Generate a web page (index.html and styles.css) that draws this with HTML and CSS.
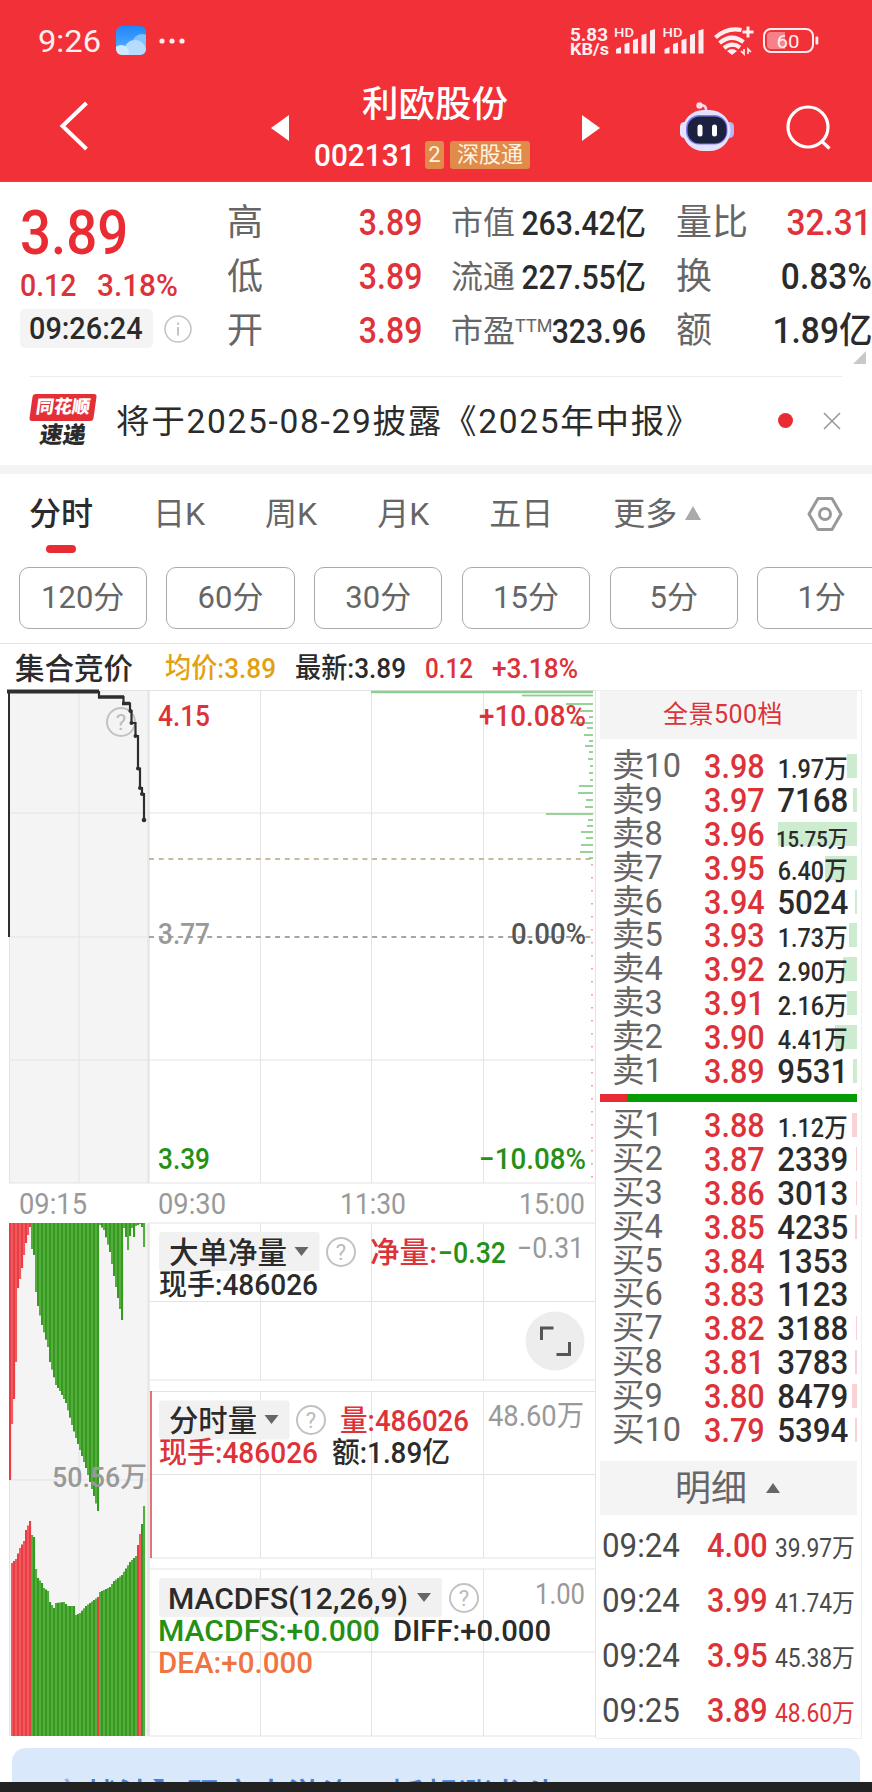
FILE: index.html
```
<!DOCTYPE html>
<html lang="zh-CN">
  <head>
    <meta charset="utf-8">
    <title>利欧股份 002131</title>
    <link rel="stylesheet" href="styles.css">
  </head>
  <body>
    <header class="header">
      <svg class="status" viewBox="0 0 872 70">
        <defs>
          <linearGradient id="sky" x1="0" y1="0" x2="0" y2="1">
            <stop offset="0" stop-color="#1f86fb"/>
            <stop offset="1" stop-color="#5db4ff"/>
          </linearGradient>
          <clipPath id="skyClip"><rect x="116" y="26" width="30" height="29" rx="6"/></clipPath>
        </defs>
        <text x="38" y="52" font-size="32" textLength="63" lengthAdjust="spacingAndGlyphs">9:26</text>
        <g clip-path="url(#skyClip)">
          <rect x="116" y="26" width="30" height="29" fill="url(#sky)"/>
          <circle cx="142" cy="44" r="10" fill="#80c2ff"/>
          <circle cx="135" cy="51" r="11" fill="#b5dcff"/>
          <circle cx="121" cy="53" r="8" fill="#cfe9ff"/>
        </g>
        <circle cx="162" cy="41" r="2.6"/>
        <circle cx="172" cy="41" r="2.6"/>
        <circle cx="182" cy="41" r="2.6"/>
        <g font-weight="700">
          <text x="570" y="40.500" font-size="17.500" textLength="38" lengthAdjust="spacingAndGlyphs">5.83</text>
          <text x="570" y="55" font-size="16.500" textLength="39" lengthAdjust="spacingAndGlyphs">KB/s</text>
        </g>
        <text x="614" y="37" font-size="12.500" font-weight="500" textLength="20" lengthAdjust="spacingAndGlyphs">HD</text>
        <text x="662.500" y="37" font-size="12.500" font-weight="500" textLength="20" lengthAdjust="spacingAndGlyphs">HD</text>
        <path id="signal" d="M616 49l5-2v6.500h-5zM624.500 44l5-1.500v11h-5zM633 40l5-1.500v15H633zM641.500 35l5-1.500v20h-5zM650 30.500l5-1.500v24.500H650z"/>
        <use href="#signal" x="48.500"/>
        <g fill="none" stroke="#ffeef0" stroke-width="4.200">
          <path d="M715.500 37.500Q727 27 741.500 30"/>
          <path d="M719.500 43q12-10 24-1"/>
          <path d="M724 48q8-6.500 16-.5"/>
          <path d="M748 26.500v11M742.500 32h11" stroke-width="3"/>
          <path d="M744 49v5l-3-3M748 54v-5l3 3" stroke-width="1.700"/>
        </g>
        <path d="M727 51q5-4 10 0l-5 4z"/>
        <rect x="764" y="29" width="49" height="23" rx="7" fill="none" stroke="#ffeef0" stroke-width="2"/>
        <path d="M771 32h14v17h-14a4 4 0 0 1-4-4v-9a4 4 0 0 1 4-4z" fill="#f88087"/>
        <rect x="815.500" y="36.500" width="2.800" height="8" rx="1"/>
        <text x="776.500" y="47.500" font-size="19" textLength="23" lengthAdjust="spacingAndGlyphs">60</text>
      </svg>
      <nav class="nav">
        <svg class="nav-icon back" width="40" height="60" viewBox="0 0 40 60"><path d="M33.500 7L9.500 30l24 23"/></svg>
        <svg class="arrow prev" width="18" height="28"><path d="M0 14L18 1v26z"/></svg>
        <div class="stock">
          <div class="stock-name">利欧股份</div>
          <div class="stock-sub">
            <span class="stock-code">002131</span>
            <span class="badge badge-num">2</span>
            <span class="badge">深股通</span>
          </div>
        </div>
        <svg class="arrow next" width="18" height="28"><path d="M18 14L0 1v26z"/></svg>
        <svg class="robot" width="54" height="50" viewBox="0 0 54 50">
          <path d="M19 3q8-1 7 7" fill="none" stroke="#f8d5ea" stroke-width="2.500"/>
          <circle cx="19.500" cy="3.500" r="3.200" fill="#fbdcec"/>
          <rect x="0" y="20" width="9" height="16" rx="4.500" fill="#e9e4ff"/>
          <rect x="45" y="20" width="9" height="16" rx="4.500" fill="#b9b5fa"/>
          <rect x="2.500" y="8" width="48" height="41" rx="21" fill="#e4e3fb"/>
          <rect x="6" y="13" width="41.500" height="29.500" rx="13" fill="#7f7df0"/>
          <rect x="7.500" y="14.500" width="39" height="27" rx="12" fill="#1c2140"/>
          <rect x="17.500" y="22.500" width="5" height="12" rx="2.500" fill="#fff"/>
          <rect x="32" y="22.500" width="5" height="12" rx="2.500" fill="#fff"/>
        </svg>
        <svg class="nav-icon search" width="48" height="48" viewBox="0 0 48 48"><circle cx="22" cy="22" r="20"/><path d="M36 36.500l7.500 7"/></svg>
      </nav>
    </header>

    <section class="quote">
      <div class="quote-main">
        <div class="price"><span class="num">3.89</span></div>
        <div class="change"><span class="num">0.12</span><span class="num">3.18%</span></div>
        <div class="clock">
          <span class="clock-pill"><span class="num">09:26:24</span></span>
          <svg width="28" height="28" viewBox="0 0 28 28"><circle cx="14" cy="14" r="13" fill="none" stroke="#c4c4c4" stroke-width="1.600"/><path d="M14 7.500v2.500M14 12v8.500" stroke="#c4c4c4" stroke-width="2"/></svg>
        </div>
      </div>
      <dl class="stats stats-a">
        <dt>高</dt><dd class="up"><span class="num">3.89</span></dd>
        <dt>低</dt><dd class="up"><span class="num">3.89</span></dd>
        <dt>开</dt><dd class="up"><span class="num">3.89</span></dd>
      </dl>
      <dl class="stats stats-b">
        <dt>市值</dt><dd><span class="num">263.42亿</span></dd>
        <dt>流通</dt><dd><span class="num">227.55亿</span></dd>
        <dt>市盈<sup>TTM</sup></dt><dd><span class="num">323.96</span></dd>
      </dl>
      <dl class="stats stats-c">
        <dt>量比</dt><dd class="up"><span class="num">32.31</span></dd>
        <dt>换</dt><dd><span class="num">0.83%</span></dd>
        <dt>额</dt><dd><span class="num">1.89亿</span></dd>
      </dl>
      <span class="corner"></span>
    </section>

    <section class="notice">
      <div class="notice-logo">
        <span class="logo-top">同花顺</span>
        <span class="logo-bottom">速递</span>
      </div>
      <p>将于2025-08-29披露《2025年中报》</p>
      <span class="dot"></span>
      <svg width="18" height="18" viewBox="0 0 18 18"><path d="M1 1l16 16M17 1L1 17" stroke="#999" stroke-width="1.600"/></svg>
    </section>

    <nav class="tabs">
      <span class="tab active">分时</span>
      <span class="tab">日K</span>
      <span class="tab">周K</span>
      <span class="tab">月K</span>
      <span class="tab">五日</span>
      <span class="tab">更多<i class="tri-up"></i></span>
      <svg class="settings" width="36" height="36" viewBox="0 0 36 36"><path d="M11 2.500h14L34 18l-9 15.500H11L2 18z"/><circle cx="18" cy="18" r="5.500"/></svg>
    </nav>

    <div class="periods">
      <button>120分</button>
      <button>60分</button>
      <button>30分</button>
      <button>15分</button>
      <button>5分</button>
      <button>1分</button>
    </div>

    <main class="market">
      <svg class="chart" viewBox="0 644 596 1100">
        <!-- info line -->
        <g font-size="28" font-weight="500">
          <text class="ink" x="15" y="678.500" font-size="29.500" textLength="118" lengthAdjust="spacingAndGlyphs">集合竞价</text>
          <text class="gold" x="165" y="678" textLength="111" lengthAdjust="spacingAndGlyphs">均价:3.89</text>
          <text class="ink" x="295" y="678" textLength="111" lengthAdjust="spacingAndGlyphs">最新:3.89</text>
          <text class="red" x="425" y="678" textLength="48" lengthAdjust="spacingAndGlyphs">0.12</text>
          <text class="red" x="492" y="678" textLength="86" lengthAdjust="spacingAndGlyphs">+3.18%</text>
        </g>

        <!-- call auction background -->
        <rect x="9" y="691" width="139.500" height="492" fill="#f4f4f4"/>
        <rect x="9" y="1223" width="139.500" height="513" fill="#f4f4f4"/>

        <path class="grid" d="M9.500 691V1183M79 691V1183M260.500 691V1183M371.500 691V1183M483.500 691V1183M9 690.500H596M9 813H596M9 937H149M9 1060H596M9 1183H596"/>
        <path class="grid" d="M9.500 1223V1736M79 1223V1736M9 1480H149M149 1223H596M149 1301.500H596M149 1380H596M260.500 1223V1380M371.500 1223V1380M483.500 1223V1380"/>
        <path class="grid" d="M149 1391.500H596M149 1474.500H596M149 1558H596M260.500 1391V1558M371.500 1391V1558M483.500 1391V1558"/>
        <path class="grid" d="M149 1569H596M149 1652H596M149 1736H596M260.500 1569V1736M371.500 1569V1736M483.500 1569V1736"/>
        <path d="M148.500 691V1183M148.500 1223V1736" stroke="#e6e6e6" stroke-width="2.500"/>
        <path class="grid" d="M595.500 690V1738"/>

        <path d="M149 859H594" stroke="#b5a27c" stroke-width="1.500" stroke-dasharray="5 4.700"/>
        <path d="M149 937H594" stroke="#888" stroke-width="1.500" stroke-dasharray="5 4.700"/>

        <g id="depth"></g>

        <g class="help"><circle cx="121" cy="722" r="14"/><text x="121" y="730" text-anchor="middle">?</text></g>
        <path d="M9 937V691.500" stroke="#2e2e2e" stroke-width="2"/>
        <path d="M7 691.500H99" stroke="#2e2e2e" stroke-width="4"/>
        <path d="M99 691v6h24.500v6.500h6.500v7.500h1.500v12h4v13h2.500v32.500h2V788h2v6h2v26" fill="none" stroke="#2e2e2e" stroke-width="2.200"/>
        <path d="M98 697h26M122 703.500h8" stroke="#2e2e2e" stroke-width="3.500"/>
        <g fill="#2e2e2e">
          <circle cx="130.500" cy="711" r="2"/><circle cx="131.500" cy="723" r="2"/><circle cx="135.500" cy="736" r="2"/>
          <circle cx="138" cy="768.500" r="2"/><circle cx="140" cy="788" r="2"/><circle cx="142" cy="794" r="2"/><circle cx="144" cy="820" r="2.300"/>
        </g>

        <!-- axis labels -->
        <g font-size="29" font-weight="500">
          <text class="red" x="158" y="725.500" textLength="52" lengthAdjust="spacingAndGlyphs">4.15</text>
          <text class="gray" x="158" y="944" textLength="52" lengthAdjust="spacingAndGlyphs">3.77</text>
          <text class="green" x="158" y="1169" textLength="52" lengthAdjust="spacingAndGlyphs">3.39</text>
          <text class="red" x="479" y="725.500" textLength="107" lengthAdjust="spacingAndGlyphs">+10.08%</text>
          <text class="dim" x="511" y="944" textLength="75" lengthAdjust="spacingAndGlyphs">0.00%</text>
          <text class="green" x="479" y="1169" textLength="107" lengthAdjust="spacingAndGlyphs">−10.08%</text>
        </g>
        <g class="gray" font-size="29">
          <text x="19" y="1214" textLength="68" lengthAdjust="spacingAndGlyphs">09:15</text>
          <text x="158" y="1214" textLength="68" lengthAdjust="spacingAndGlyphs">09:30</text>
          <text x="340" y="1214" textLength="66" lengthAdjust="spacingAndGlyphs">11:30</text>
          <text x="519" y="1214" textLength="66" lengthAdjust="spacingAndGlyphs">15:00</text>
        </g>

        <g id="netBars"></g>
        <g id="volBars"></g>
        <text class="gray" x="52" y="1487" font-size="28" font-weight="500" textLength="95" lengthAdjust="spacingAndGlyphs">50.56万</text>

        <!-- net order panel -->
        <rect class="chip" x="159" y="1232" width="160.500" height="39" rx="3"/>
        <text class="ink" x="169" y="1263" font-size="30" font-weight="500" textLength="118" lengthAdjust="spacingAndGlyphs">大单净量</text>
        <path class="caret" d="M294.500 1247h14l-7 9z"/>
        <g class="help"><circle cx="341" cy="1252" r="14"/><text x="341" y="1260" text-anchor="middle">?</text></g>
        <g font-size="29" font-weight="500">
          <text class="red" x="370" y="1263" textLength="67" lengthAdjust="spacingAndGlyphs">净量:</text>
          <text class="green" x="438" y="1263" textLength="68" lengthAdjust="spacingAndGlyphs">−0.32</text>
          <text class="ink" x="159" y="1295" textLength="159" lengthAdjust="spacingAndGlyphs">现手:486026</text>
        </g>
        <text class="gray" x="517" y="1258" font-size="29" textLength="67" lengthAdjust="spacingAndGlyphs">−0.31</text>
        <circle cx="555" cy="1341" r="29.500" fill="#ededed"/>
        <path d="M541.500 1340V1328h12M569.500 1342v12.500h-13" fill="none" stroke="#555" stroke-width="3"/>

        <!-- volume panel -->
        <path d="M151 1391V1558" stroke="#d9464c" stroke-width="1.500"/>
        <rect class="chip" x="159" y="1400.500" width="130.500" height="39" rx="3"/>
        <text class="ink" x="169" y="1431" font-size="30" font-weight="500" textLength="88" lengthAdjust="spacingAndGlyphs">分时量</text>
        <path class="caret" d="M264.500 1415h14l-7 9z"/>
        <g class="help"><circle cx="311" cy="1420" r="14"/><text x="311" y="1428" text-anchor="middle">?</text></g>
        <g font-size="29" font-weight="500">
          <text class="red" x="340" y="1431" textLength="129" lengthAdjust="spacingAndGlyphs">量:486026</text>
          <text class="red" x="159" y="1463" textLength="159" lengthAdjust="spacingAndGlyphs">现手:486026</text>
          <text class="ink" x="332" y="1463" textLength="118" lengthAdjust="spacingAndGlyphs">额:1.89亿</text>
        </g>
        <text class="gray" x="488" y="1426" font-size="29" textLength="96" lengthAdjust="spacingAndGlyphs">48.60万</text>

        <!-- MACD panel -->
        <rect class="chip" x="159" y="1578" width="283" height="39" rx="3"/>
        <text class="ink" x="168" y="1609" font-size="30" font-weight="500" textLength="240" lengthAdjust="spacingAndGlyphs">MACDFS(12,26,9)</text>
        <path class="caret" d="M417 1593h14l-7 9z"/>
        <g class="help"><circle cx="464" cy="1598" r="14"/><text x="464" y="1606" text-anchor="middle">?</text></g>
        <g font-size="29" font-weight="500">
          <text class="green" x="158" y="1640.500" textLength="222" lengthAdjust="spacingAndGlyphs">MACDFS:+0.000</text>
          <text class="ink" x="393" y="1640.500" textLength="158" lengthAdjust="spacingAndGlyphs">DIFF:+0.000</text>
          <text class="orange" x="158" y="1673" textLength="155" lengthAdjust="spacingAndGlyphs">DEA:+0.000</text>
        </g>
        <text class="gray" x="535" y="1604" font-size="29" textLength="50" lengthAdjust="spacingAndGlyphs">1.00</text>
      </svg>

      <aside class="book">
        <div class="book-head">全景500档</div>
        <div class="levels" id="asks"></div>
        <div class="ratio"><span></span></div>
        <div class="levels" id="bids"></div>
        <div class="detail-head">明细<i class="tri-up dark"></i></div>
        <div class="ticks" id="ticks"></div>
      </aside>
    </main>

    <div class="banner"><span class="faded">实</span>战法】跟庄大游资，抓起涨龙头</div>
    <div class="bottom-bar"></div>
    <script src="script.js"></script>
  </body>
</html>
```
FILE: styles.css
```
* {
  box-sizing: border-box;
}

body {
  margin: 0;
  width: 872px;
  height: 1792px;
  overflow: hidden;
  background: #fff;
  color: #2b2b2b;
  font-family: Roboto, "Noto Sans CJK SC", sans-serif;
}

.num {
  display: inline-block;
  transform: scaleX(0.89);
  transform-origin: left;
  white-space: nowrap;
}

.up {
  color: #e0323a;
}

/* header */
.header {
  height: 182px;
  background: #f23038;
  border-bottom: 1px solid #d9474c;
  color: #fff;
}

.status {
  display: block;
  width: 872px;
  height: 70px;
  fill: #ffeef0;
}

.nav {
  display: flex;
  height: 111px;
}

.nav-icon {
  fill: none;
  stroke: #fff;
  stroke-width: 4;
}

.back {
  margin: 26px 0 0 53px;
}

.arrow {
  fill: #fff;
  margin-top: 44px;
}

.prev {
  margin-left: 178px;
}

.stock {
  width: 240px;
  margin-left: 14px;
}

.stock-name {
  margin: 14px 0 0 59px;
  font-size: 36.5px;
  line-height: 42px;
  font-weight: 500;
}

.stock-sub {
  display: flex;
  align-items: center;
  height: 28px;
  margin: 15px 0 0 11px;
}

.stock-code {
  width: 111px;
  font-size: 32px;
  font-weight: 500;
  transform: scaleX(0.93);
  transform-origin: left;
}

.badge {
  height: 28px;
  width: 80px;
  border-radius: 3px;
  background: #e08b49;
  font-size: 22px;
  line-height: 27px;
  text-align: center;
  color: #fff3e3;
}

.badge-num {
  width: 19px;
  margin-right: 6px;
}

.next {
  margin-left: 39px;
}

.robot {
  margin: 32px 0 0 80px;
}

.search {
  margin: 35px 0 0 52px;
  stroke-width: 3.2;
}

/* quote */
.quote {
  position: relative;
  display: flex;
  height: 194px;
  padding-top: 14px;
}

.quote-main {
  width: 227px;
  padding-left: 20px;
}

.price {
  height: 74px;
  font-size: 62px;
  line-height: 74px;
  font-weight: 500;
  color: #e92c34;
}

.price .num {
  transform: scaleX(0.88);
}

.change {
  display: flex;
  gap: 14px;
  height: 32px;
  font-size: 32px;
  line-height: 31px;
  font-weight: 500;
  color: #dc323a;
}

.change .num + .num {
  transform: scaleX(0.93);
}

.clock {
  display: flex;
  align-items: center;
  gap: 11px;
  height: 39px;
  margin-top: 7px;
}

.clock-pill {
  width: 133px;
  height: 39px;
  padding-left: 9px;
  border-radius: 5px;
  background: #f4f4f4;
  font-size: 31px;
  line-height: 39px;
  font-weight: 500;
}

.clock-pill .num {
  transform: scaleX(0.93);
}

.stats {
  display: grid;
  grid-template-columns: auto auto;
  grid-template-rows: repeat(3, 54px);
  justify-content: space-between;
  margin: 0;
  font-size: 36px;
  line-height: 55px;
  white-space: nowrap;
}

.stats dt {
  color: #666;
}

.stats dd {
  margin: 0;
  text-align: right;
  font-weight: 500;
}

.stats .num {
  transform-origin: right;
}

.stats-a {
  width: 195px;
}

.stats-b {
  grid-template-columns: 52px auto;
  width: 195px;
  margin-left: 29px;
  font-size: 32px;
}

.stats-b dd {
  font-size: 34px;
}

.stats-c {
  width: 196px;
  margin-left: 30px;
}

.stats-c .num {
  transform: scaleX(0.93);
}

.stats sup {
  font-size: 18px;
  line-height: 0;
  vertical-align: 10px;
}

.corner {
  position: absolute;
  right: 6px;
  bottom: 12px;
  border-left: 13px solid transparent;
  border-bottom: 13px solid #c9c9c9;
}

/* notice */
.notice {
  display: flex;
  align-items: center;
  height: 98px;
  border-bottom: 9px solid #f3f3f3;
  padding-left: 31px;
  position: relative;
}

.notice::before {
  content: "";
  position: absolute;
  top: 0;
  left: 30px;
  width: 812px;
  height: 1px;
  background: #ececec;
}

.notice-logo {
  width: 64px;
  margin-right: 21px;
  font-weight: 900;
  text-align: center;
}

.logo-top,
.logo-bottom {
  display: block;
  transform: skewX(-8deg);
}

.logo-top {
  height: 27px;
  border-radius: 3px;
  background: #e42f37;
  color: #fff;
  font-size: 18px;
  line-height: 26px;
}

.logo-bottom {
  height: 27px;
  font-size: 23px;
  line-height: 30px;
}

.notice p {
  width: 662px;
  margin: -5px 0 0;
  font-size: 33.5px;
  letter-spacing: 1.7px;
  white-space: nowrap;
}

.dot {
  width: 15px;
  height: 15px;
  border-radius: 50%;
  background: #e92c34;
  margin-right: 30px;
}

/* tabs */
.tabs {
  display: flex;
  align-items: center;
  height: 80px;
  padding-left: 29px;
  font-size: 32px;
  color: #666;
}

.tab {
  position: relative;
  margin-top: -6px;
  margin-right: 60px;
  white-space: nowrap;
}

.tab.active {
  color: #2b2b2b;
  font-weight: 500;
}

.tab.active::after {
  content: "";
  position: absolute;
  left: 17px;
  bottom: -19px;
  width: 30px;
  height: 8px;
  border-radius: 4px;
  background: #e92c34;
}

.tri-up {
  display: inline-block;
  margin-left: 8px;
  border: 8px solid transparent;
  border-top: 0;
  border-bottom: 14px solid #aaa;
  vertical-align: 5px;
}

.settings {
  margin-left: 46px;
  fill: none;
  stroke: #999;
  stroke-width: 3;
  stroke-linejoin: round;
}

.periods {
  display: flex;
  gap: 19.4px;
  height: 90px;
  padding: 13px 0 0 18.5px;
  border-bottom: 1px solid #e4e4e4;
  overflow: hidden;
}

.periods button {
  flex: 0 0 128.4px;
  height: 62px;
  padding: 0;
  border: 1px solid #aaa;
  border-radius: 10px;
  background: #fff;
  color: #666;
  font: 31px/60px Roboto, "Noto Sans CJK SC", sans-serif;
}

/* chart */
.market {
  display: flex;
  height: 1100px;
}

.chart {
  width: 596px;
  height: 1100px;
}

.chart .grid {
  stroke: #e3e3e3;
  stroke-width: 1;
  fill: none;
}

.red { fill: #dc3238; }
.green { fill: #259016; }
.gold { fill: #e2a10f; }
.orange { fill: #ee7440; }
.gray { fill: #999; }
.dim { fill: #555; }
.ink { fill: #2b2b2b; }
.chip { fill: #f1f1f1; }
.caret { fill: #666; }

.help circle {
  fill: none;
  stroke: #c2c2c2;
  stroke-width: 2;
}

.help text {
  fill: #bbb;
  font-size: 22px;
}

/* order book */
.book {
  width: 266px;
  height: 1049px;
  margin-top: 46px;
  padding: 0 4px 0 4px;
  border: 1px solid #efefef;
  border-left: 0;
}

.book-head {
  height: 48px;
  padding-right: 11px;
  background: #f4f4f4;
  color: #dc3238;
  font-size: 25px;
  letter-spacing: 0.5px;
  line-height: 47px;
  text-align: center;
}

.levels {
  height: 356px;
  padding-top: 11px;
}

#bids {
  height: 359px;
  padding-top: 7px;
}

.level {
  position: relative;
  display: grid;
  grid-template-columns: 92px 71px 73px;
  height: 33.9px;
  padding-left: 12px;
  font-size: 34px;
  line-height: 33.9px;
}

.level .label {
  font-size: 32.5px;
  color: #666;
  white-space: nowrap;
}

.level .cost,
.tick .cost {
  color: #dc3238;
  font-weight: 500;
}

.level .cost .num,
.tick .cost .num {
  transform: scaleX(0.9);
}

.vol {
  display: flex;
  justify-content: flex-end;
}

.level .vol {
  position: relative;
  font-weight: 500;
}

.vol .num {
  transform-origin: right;
}

.level .vol .num {
  transform: scaleX(0.92);
}

.level .vol.wan {
  font-size: 26px;
  line-height: 39px;
}

.level .vol.wide {
  font-size: 22.5px;
  line-height: 42px;
}

.level .vol.wan .num {
  transform: scaleX(0.9);
}

.level .bar {
  position: absolute;
  right: 0;
  top: 4px;
  height: 24px;
  background: #cdeccf;
}

#bids .bar {
  background: #f9d2d6;
}

.ratio {
  height: 8px;
  margin-top: -1px;
  background: #069c06;
}

.ratio span {
  display: block;
  width: 27px;
  height: 8px;
  background: #e92c34;
}

.detail-head {
  height: 54px;
  background: #f4f4f4;
  color: #666;
  font-size: 36px;
  line-height: 56px;
  text-align: center;
  padding-right: 2px;
}

.dark {
  margin-left: 19px;
  border-width: 0 7px 10px;
  border-bottom-color: #666;
  vertical-align: 8px;
}

.ticks {
  padding-top: 3px;
}

.tick {
  display: grid;
  grid-template-columns: 105px 64px 84px;
  height: 55px;
  padding-left: 2px;
  font-size: 34px;
  line-height: 55px;
  color: #4a4a4a;
}

.tick .num {
  transform: scaleX(0.92);
}

.tick .vol {
  font-size: 25px;
  line-height: 61px;
  white-space: nowrap;
}

.tick .vol .num {
  transform: scaleX(0.91);
}

.tick .vol.last {
  color: #dc3238;
}

/* bottom */
.banner {
  width: 848px;
  height: 34px;
  margin: 4px 0 0 12px;
  padding: 28px 0 0 38px;
  border-radius: 14px 14px 0 0;
  background: #dae8fc;
  color: #3f82e0;
  font-size: 34px;
  line-height: 40px;
  font-weight: 500;
  overflow: hidden;
  white-space: nowrap;
}

.faded {
  opacity: 0.5;
}

.bottom-bar {
  height: 10px;
  background: #222;
}
```
FILE: script.js
```
const asks = [
  ['卖10', '3.98', '1.97万', 10], ['卖9', '3.97', '7168', 4],
  ['卖8', '3.96', '15.75万', 79], ['卖7', '3.95', '6.40万', 32],
  ['卖6', '3.94', '5024', 2.5], ['卖5', '3.93', '1.73万', 8],
  ['卖4', '3.92', '2.90万', 14], ['卖3', '3.91', '2.16万', 10],
  ['卖2', '3.90', '4.41万', 22], ['卖1', '3.89', '9531', 4]
];
const bids = [
  ['买1', '3.88', '1.12万', 5], ['买2', '3.87', '2339', 1],
  ['买3', '3.86', '3013', 1], ['买4', '3.85', '4235', 2],
  ['买5', '3.84', '1353', 0], ['买6', '3.83', '1123', 0],
  ['买7', '3.82', '3188', 1], ['买8', '3.81', '3783', 2],
  ['买9', '3.80', '8479', 5], ['买10', '3.79', '5394', 2]
];
const ticks = [
  ['09:24', '4.00', '39.97万'],
  ['09:24', '3.99', '41.74万'],
  ['09:24', '3.95', '45.38万'],
  ['09:25', '3.89', '48.60万']
];

function renderLevels(id, rows) {
  document.getElementById(id).innerHTML = rows.map(([label, cost, vol, width]) => {
    const size = vol.length > 5 ? 'wan wide' : vol.includes('万') ? 'wan' : '';
    return `<div class="level"><span class="bar" style="width:${width}px"></span>
      <span class="label">${label}</span>
      <span class="cost"><span class="num">${cost}</span></span>
      <span class="vol ${size}"><span class="num">${vol}</span></span></div>`;
  }).join('');
}
renderLevels('asks', asks);
renderLevels('bids', bids);

document.getElementById('ticks').innerHTML = ticks.map(([time, cost, vol], i) =>
  `<div class="tick"><span><span class="num">${time}</span></span>
    <span class="cost"><span class="num">${cost}</span></span>
    <span class="vol ${i === 3 ? 'last' : ''}"><span class="num">${vol}</span></span></div>`
).join('');

// [x, y] outlines, one bar is drawn every 2px between the points
const net = [
  [9, 1480], [11, 1424], [13, 1399], [15, 1362], [17, 1288], [19, 1279], [21, 1268],
  [23, 1255], [25, 1243], [27, 1235], [29, 1227], [31, 1249], [33, 1255], [35, 1292],
  [37, 1306], [41, 1325], [47, 1347], [49, 1362], [55, 1385], [59, 1391], [65, 1403],
  [71, 1425], [75, 1438], [85, 1468], [93, 1496], [97, 1511], [99, 1225], [103, 1230],
  [109, 1252], [113, 1276], [121, 1320], [123, 1228], [125, 1237], [127, 1250],
  [129, 1236], [131, 1228], [133, 1237], [135, 1226], [139, 1224], [141, 1227], [143, 1247]
];
const volume = [
  [11, 1563], [15, 1559], [19, 1548], [23, 1541], [25, 1530], [29, 1521], [31, 1535],
  [33, 1537], [35, 1569], [37, 1578], [41, 1583], [43, 1588], [47, 1591], [49, 1602],
  [53, 1608], [55, 1603], [63, 1602], [67, 1606], [73, 1606], [75, 1615], [79, 1613],
  [85, 1606], [97, 1597], [99, 1592], [109, 1587], [113, 1581], [121, 1575], [129, 1562],
  [135, 1556], [137, 1545], [139, 1534], [141, 1524], [143, 1506]
];

function heightAt(points, x) {
  for (let i = 1; i < points.length; i++) {
    const [x0, y0] = points[i - 1];
    const [x1, y1] = points[i];
    if (x <= x1) return y0 + (y1 - y0) * (x - x0) / (x1 - x0);
  }
  return points[points.length - 1][1];
}

function drawBars(id, points, base, isRed) {
  let out = '';
  for (let x = points[0][0]; x <= 143; x += 2) {
    const y = heightAt(points, x);
    const light = x % 4 === 1;
    const color = isRed(x) ? (light ? '#e93d43' : '#ee5a5e') : (light ? '#359a1f' : '#55ad3e');
    out += `<rect x="${x}" y="${Math.min(y, base)}" width="2.1" height="${Math.abs(base - y)}" fill="${color}"/>`;
  }
  document.getElementById(id).innerHTML = out;
}
drawBars('netBars', net, 1223, x => x < 31 || x === 139);
drawBars('volBars', volume, 1736, x => x < 31 || x === 97 || x === 137 || x === 139);

// resting orders along the right edge: [y, length]
const green = [
  [692, 222, 2.5], [695.5, 71], [704, 27], [711, 13], [717, 4], [723, 21], [728, 6], [735, 9],
  [741, 4], [746, 8], [752, 4], [759, 5], [766, 3], [773, 4], [780, 3], [786, 14], [793, 15],
  [800, 7], [807, 8], [814, 47], [820, 5], [826, 6], [832, 12], [838, 7], [845, 12], [852, 13], [858, 4]
];
let depth = green.map(([y, w, h = 1.8]) =>
  `<rect x="${593 - w}" y="${y - h / 2}" width="${w}" height="${h}" fill="#8ccf8e"/>`).join('');
for (let y = 864; y < 1180; y += 13) {
  depth += `<rect x="591" y="${y}" width="2" height="1.5" fill="#f0a3a8"/>`;
}
document.getElementById('depth').innerHTML = depth;
```
